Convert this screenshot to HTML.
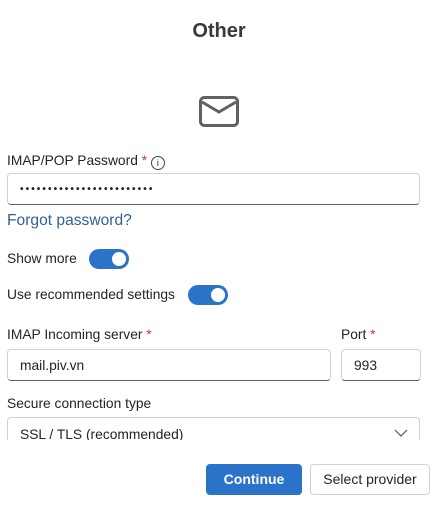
<!DOCTYPE html><html><head><style>
body{margin:0;width:444px;height:509px;background:#fff;font-family:"Liberation Sans",sans-serif;color:#242424;position:relative;overflow:hidden}
.a{position:absolute}
.l{font-size:13.8px}
.in{position:absolute;border:1px solid #d1d1d1;border-bottom-color:#616161;border-radius:4px;box-sizing:border-box;font-size:13.8px;padding-left:12px;display:flex;align-items:center}
.r{color:#c4314b}
.t{position:absolute;width:40px;height:20px;border-radius:10px;background:#2b73c9}
.t:after{content:"";position:absolute;right:3px;top:3px;width:14px;height:14px;border-radius:50%;background:#fff}
</style></head><body>
<div class="a" style="left:0;width:438px;top:20px;text-align:center;font-size:20px;font-weight:bold;color:#3a3a3a">Other</div>
<svg class="a" style="left:199px;top:96px" width="40" height="31" viewBox="0 0 40 31"><rect x="1.5" y="1.5" width="37" height="28" rx="4" fill="none" stroke="#616161" stroke-width="3"/><path d="M3 6 L20 16 L37 6" fill="none" stroke="#616161" stroke-width="3"/></svg>
<div class="a l" style="left:7px;top:153px">IMAP/POP Password <span class="r">*</span> <span style="display:inline-block;width:12px;height:12px;border:1px solid #444;border-radius:50%;font-size:9px;text-align:center;line-height:12px;vertical-align:-1px">i</span></div>
<div class="in" style="left:7px;top:173px;width:413px;height:32px;font-size:10px;letter-spacing:2.1px;font-weight:bold">••••••••••••••••••••••••</div>
<div class="a" style="left:7px;top:212px;font-size:15.6px;color:#2f5f98">Forgot password?</div>
<div class="a l" style="left:7px;top:251px">Show more</div><div class="t" style="left:89px;top:249px"></div>
<div class="a l" style="left:7px;top:287px">Use recommended settings</div><div class="t" style="left:188px;top:285px"></div>
<div class="a l" style="left:7px;top:327px">IMAP Incoming server <span class="r">*</span></div>
<div class="a l" style="left:341px;top:327px">Port <span class="r">*</span></div>
<div class="in" style="left:7px;top:349px;width:324px;height:32px">mail.piv.vn</div>
<div class="in" style="left:341px;top:349px;width:80px;height:32px">993</div>
<div class="a l" style="left:7px;top:396px">Secure connection type</div>
<div style="position:absolute;left:0;top:416px;width:444px;height:24px;overflow:hidden"><div class="in" style="left:7px;top:1px;width:413px;height:32px;align-items:flex-start;padding-top:9px">SSL / TLS (recommended)</div><svg class="a" style="left:394px;top:13px" width="14" height="8"><path d="M1 1 L7 7 L13 1" fill="none" stroke="#555" stroke-width="1.2"/></svg></div>
<div class="a" style="left:206px;top:464px;width:96px;height:31px;background:#2b73c9;border-radius:4px;color:#fff;font-weight:bold;font-size:14px;text-align:center;line-height:31px">Continue</div>
<div class="a" style="left:310px;top:464px;width:120px;height:31px;box-sizing:border-box;border:1px solid #d1d1d1;border-radius:4px;font-size:14px;text-align:center;line-height:29px">Select provider</div>
</body></html>
